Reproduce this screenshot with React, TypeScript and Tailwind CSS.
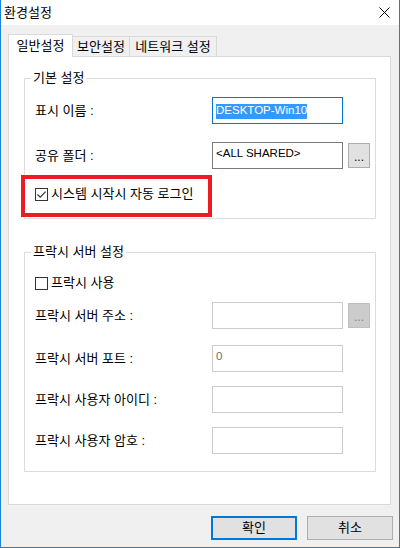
import React from "react"

// Windows-style "환경설정" dialog

function CheckBox({ checked }: { checked?: boolean }) {
  return (
    <span className="flex h-[13px] w-[13px] shrink-0 items-center justify-center border border-[#333333] bg-white">
      {checked && (
        <svg width="11" height="11" viewBox="0 0 11 11">
          <path d="M1.5 5.5 L4.2 8.2 L9.6 2.6" fill="none" stroke="#333333" strokeWidth="1.2" />
        </svg>
      )}
    </span>
  )
}

function Row({
  label,
  className,
  children,
}: {
  label: string
  className?: string
  children: React.ReactNode
}) {
  return (
    <div className={`flex h-[27px] items-center ${className ?? ""}`}>
      <span className="w-[177px] shrink-0">{label}</span>
      {children}
    </div>
  )
}

function Box({ disabled, focused, children }: { disabled?: boolean; focused?: boolean; children?: React.ReactNode }) {
  const border = focused ? "border-[#0078d7]" : disabled ? "border-[#cccccc]" : "border-[#7a7a7a]"
  return (
    <div className={`h-[27px] w-[131px] shrink-0 border bg-white pl-[3px] text-[11.5px] ${focused ? "pt-[4px]" : "pt-[2px]"} ${border} ${disabled ? "text-[#6d6d6d]" : "text-black"}`}>
      {children}
    </div>
  )
}

function DotsButton({ disabled }: { disabled?: boolean }) {
  return (
    <div
      className={`ml-[5px] flex h-[25px] w-[22px] shrink-0 items-center justify-center border pt-[2px] text-[12px] ${
        disabled ? "border-[#bfbfbf] bg-[#cccccc] text-[#838383]" : "border-[#adadad] bg-[#e1e1e1] text-black"
      }`}
    >
      ...
    </div>
  )
}

export default function App() {
  return (
    <div className="flex h-[548px] w-[400px] flex-col border-x border-b border-[#1883d7] bg-[#f0f0f0] font-['Liberation_Sans','Noto_Sans_CJK_KR',sans-serif] text-[13px] leading-[16px] text-black">
      {/* title bar */}
      <div className="flex h-[25px] shrink-0 items-center justify-between bg-white pl-[3px] pr-[9px]">
        <span>환경설정</span>
        <svg width="11" height="11" viewBox="0 0 11 11">
          <path d="M0.5 0.5 L10.5 10.5 M10.5 0.5 L0.5 10.5" stroke="#000000" strokeWidth="1" />
        </svg>
      </div>

      <div className="flex flex-1 flex-col pl-[7px] pr-[8px] pt-[9px]">
        {/* tabs */}
        <div className="flex h-[23px] items-end">
          <div className="relative z-10 flex h-[23px] w-[65px] items-center justify-center border-x border-t border-[#d9d9d9] bg-white pb-[1px]">
            일반설정
          </div>
          <div className="flex h-[21px] w-[57px] items-center justify-center border-y border-r border-[#d9d9d9] bg-[#f0f0f0]">
            보안설정
          </div>
          <div className="flex h-[21px] w-[87px] items-center justify-center border-y border-r border-[#d9d9d9] bg-[#f0f0f0]">
            네트워크 설정
          </div>
        </div>

        {/* tab panel */}
        <div className="-mt-px h-[449px] border border-[#d9d9d9] bg-white pl-[15px] pr-[14px] pt-[13px]">
          <fieldset className="border border-[#dcdcdc]">
            <legend className="ml-[6px] px-[2px]">기본 설정</legend>
            <div className="pb-[16px] pl-[10px]">
              <Row label="표시 이름 :" className="mt-[11px]">
                <Box focused>
                  <span className="inline-block h-[15px] bg-[#3399ff] leading-[12px] text-white">DESKTOP-Win10</span>
                </Box>
              </Row>
              <Row label="공유 폴더 :" className="mt-[18px]">
                <Box>&lt;ALL SHARED&gt;</Box>
                <DotsButton />
              </Row>
              <div className="relative mt-[17px] flex h-[16px] items-center gap-[3px]">
                <CheckBox checked />
                <span>시스템 시작시 자동 로그인</span>
                <span className="pointer-events-none absolute left-[-14px] top-[-11px] h-[42px] w-[191px] border-4 border-[#ed1c24]" />
              </div>
            </div>
          </fieldset>

          <fieldset className="mt-[25px] border border-[#dcdcdc]">
            <legend className="ml-[6px] px-[2px]">프락시 서버 설정</legend>
            <div className="pb-[17px] pl-[10px]">
              <div className="mt-[15px] flex h-[16px] items-center gap-[3px]">
                <CheckBox />
                <span>프락시 사용</span>
              </div>
              <Row label="프락시 서버 주소 :" className="mt-[11px]">
                <Box disabled />
                <DotsButton disabled />
              </Row>
              <Row label="프락시 서버 포트 :" className="mt-[16px]">
                <Box disabled>0</Box>
              </Row>
              <Row label="프락시 사용자 아이디 :" className="mt-[14px]">
                <Box disabled />
              </Row>
              <Row label="프락시 사용자 암호 :" className="mt-[14px]">
                <Box disabled />
              </Row>
            </div>
          </fieldset>
        </div>

        {/* buttons */}
        <div className="-mr-[2px] mt-[11px] flex justify-end gap-[10px]">
          <button className="flex h-[24px] w-[86px] items-center justify-center border-2 border-[#0078d7] bg-[#e1e1e1]">
            확인
          </button>
          <button className="flex h-[24px] w-[86px] items-center justify-center border border-[#adadad] bg-[#e1e1e1]">
            취소
          </button>
        </div>
      </div>
    </div>
  )
}
